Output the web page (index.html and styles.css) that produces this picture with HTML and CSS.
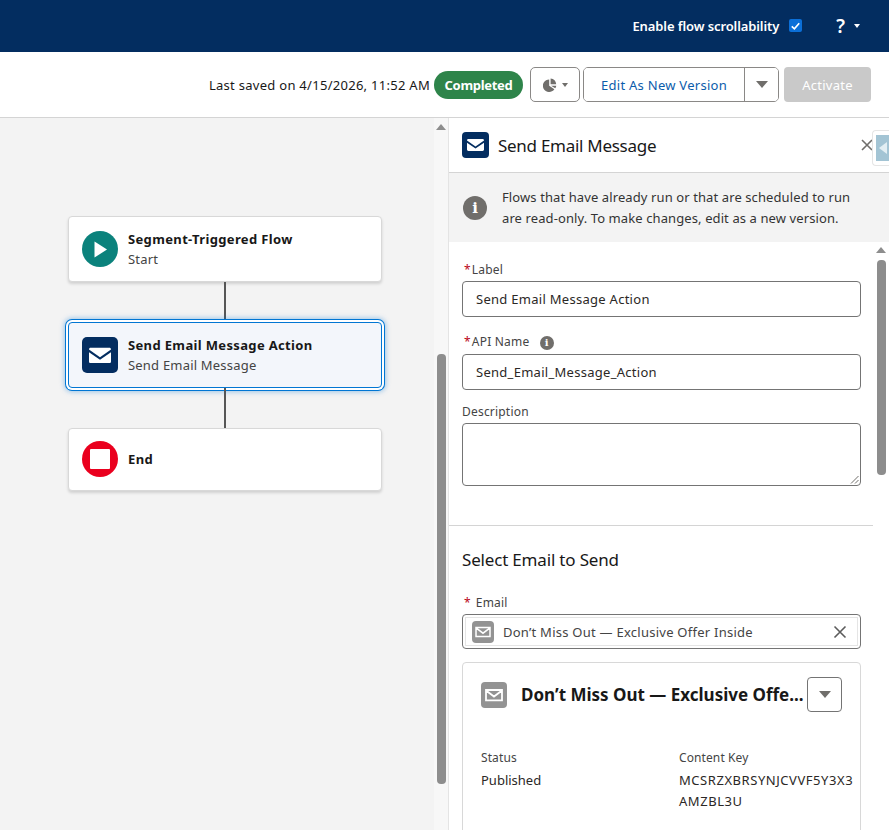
FILE: index.html
```html
<!DOCTYPE html>
<html lang="en">
<head>
    <meta charset="UTF-8">
    <meta name="viewport" content="width=device-width, initial-scale=1.0">
    <title>Send Email Message</title>
    <link rel="stylesheet" href="styles.css">
</head>
<body>
    <div class="topbar">
        <span class="scroll-label">Enable flow scrollability</span>
        <span class="checkbox">
            <svg viewBox="0 0 14 14" width="14" height="14"><path d="M3 7.4 5.8 10 11 4" fill="none" stroke="#fff" stroke-width="1.8"/></svg>
        </span>
        <span class="help">?</span>
        <span class="caret caret-white"></span>
    </div>

    <div class="toolbar">
        <span class="saved">Last saved on 4/15/2026, 11:52 AM</span>
        <span class="badge">Completed</span>
        <button class="btn btn-chart">
            <svg viewBox="0 0 14 14" width="14" height="14"><path d="M6.2 1.4v6.4l5.2 3.4A6.3 6.3 0 1 1 6.2 1.4zM7.6.6a6.3 6.3 0 0 1 5.6 5.7H7.6zM8 7.7h5.3a6.3 6.3 0 0 1-1 2.6z" fill="#706e6b"/></svg>
            <span class="caret caret-grey"></span>
        </button>
        <div class="btn-group">
            <button class="btn-main">Edit As New Version</button>
            <button class="btn-more"><span class="caret caret-big"></span></button>
        </div>
        <button class="btn-activate">Activate</button>
    </div>

    <div class="main">
        <div class="canvas">
            <div class="node">
                <span class="node-icon icon-start">
                    <svg viewBox="0 0 36 36" width="36" height="36"><path d="M12.5 10.500 25 18.500 12.500 26.500z" fill="#fff"/></svg>
                </span>
                <div class="node-text">
                    <div class="node-title">Segment-Triggered Flow</div>
                    <div class="node-sub">Start</div>
                </div>
            </div>
            <div class="connector"></div>
            <div class="node node-selected">
                <span class="node-icon icon-mail">
                    <svg viewBox="0 0 36 36" width="36" height="36"><path d="M7 12.6v-.2c0-.9.7-1.6 1.6-1.6h18.8c.9 0 1.6.7 1.6 1.6v.2L18 20.3z" fill="#fff"/><path d="M7 15.2v9.2c0 .9.7 1.6 1.6 1.6h18.8c.9 0 1.6-.7 1.6-1.6v-9.2l-11 7.6z" fill="#fff"/></svg>
                </span>
                <div class="node-text">
                    <div class="node-title">Send Email Message Action</div>
                    <div class="node-sub">Send Email Message</div>
                </div>
            </div>
            <div class="connector"></div>
            <div class="node node-end">
                <span class="node-icon icon-end"><span class="stop"></span></span>
                <div class="node-title">End</div>
            </div>
        </div>

        <div class="canvas-scroll">
            <span class="arrow-up"></span>
            <span class="canvas-thumb"></span>
        </div>

        <div class="panel">
            <div class="panel-head">
                <span class="head-icon">
                    <svg viewBox="0 0 27 26" width="27" height="26"><path d="M5 8.6v-.2c0-.8.6-1.4 1.4-1.4h14.2c.8 0 1.4.6 1.4 1.4v.2l-8.5 5.8z" fill="#fff"/><path d="M5 10.8v6.8c0 .8.6 1.4 1.4 1.4h14.2c.8 0 1.4-.6 1.4-1.4v-6.8l-8.5 5.8z" fill="#fff"/></svg>
                </span>
                <h2>Send Email Message</h2>
                <svg class="head-close" viewBox="0 0 14 14" width="14" height="14"><path d="M2 2l10 10M12 2 2 12" stroke="#706e6b" stroke-width="1.6"/></svg>
                <span class="side-tab"><span class="side-tab-inner"><span class="side-arrow"></span></span></span>
            </div>
            <div class="notice">
                <span class="info-icon">i</span>
                <p>Flows that have already run or that are scheduled to run are read-only. To make changes, edit as a new version.</p>
            </div>
            <div class="panel-body">
                <div class="form">
                    <div class="fields">
                        <label class="lbl"><span class="req">*</span>Label</label>
                        <div class="input">Send Email Message Action</div>
                        <label class="lbl lbl-api"><span class="req">*</span>API Name <span class="info-small">i</span></label>
                        <div class="input">Send_Email_Message_Action</div>
                        <label class="lbl lbl-desc">Description</label>
                        <div class="textarea">
                            <svg class="grip" viewBox="0 0 9 9" width="9" height="9"><path d="M8.5 1 1 8.5M8.5 5 5 8.5" stroke="#706e6b" stroke-width="1"/></svg>
                        </div>
                    </div>
                    <div class="divider"></div>
                    <div class="email-section">
                        <h3>Select Email to Send</h3>
                        <label class="lbl lbl-email"><span class="req req-wide">*</span>Email</label>
                        <div class="pill-box">
                            <div class="pill">
                                <span class="pill-icon">
                                    <svg viewBox="0 0 22 22" width="22" height="22"><path d="M4 6.400h14v9.200H4zM4 6.800l7 5.400 7-5.400" fill="none" stroke="#fff" stroke-width="1.500"/></svg>
                                </span>
                                <span class="pill-text">Don’t Miss Out — Exclusive Offer Inside</span>
                                <svg class="pill-x" viewBox="0 0 14 14" width="14" height="14"><path d="M1.5 1.5l11 11M12.5 1.5l-11 11" stroke="#5c5c5c" stroke-width="1.6"/></svg>
                            </div>
                        </div>
                        <div class="email-card">
                            <div class="card-head">
                                <span class="card-icon">
                                    <svg viewBox="0 0 26 26" width="26" height="26"><path d="M5 8h16v10.400H5zM5 8.500l8 6 8-6" fill="none" stroke="#fff" stroke-width="1.800"/></svg>
                                </span>
                                <span class="card-title">Don’t Miss Out — Exclusive Offe...</span>
                                <button class="card-menu"><span class="caret caret-big"></span></button>
                            </div>
                            <div class="card-grid">
                                <div class="cell-status">
                                    <div class="cell-label">Status</div>
                                    <div class="cell-value">Published</div>
                                </div>
                                <div class="cell-key">
                                    <div class="cell-label">Content Key</div>
                                    <div class="cell-value key-value">MCSRZXBRSYNJCVVF5Y3X3<br>AMZBL3U</div>
                                </div>
                            </div>
                        </div>
                    </div>
                </div>
                <div class="panel-scroll">
                    <span class="arrow-up"></span>
                    <span class="panel-thumb"></span>
                </div>
            </div>
        </div>
    </div>
</body>
</html>
```

FILE: styles.css
```css
* {
    box-sizing: border-box;
}
html, body {
    height: 100%;
}
body {
    margin: 0;
    height: 830px;
    overflow: hidden;
    font-family: "Noto Sans", "Open Sans", Arial, sans-serif;
    font-size: 13px;
    color: #181818;
    background-color: #fff;
    display: flex;
    flex-direction: column;
}
button {
    font-family: inherit;
    padding: 0;
    background: #fff;
}

/* top bar */
.topbar {
    height: 52px;
    flex: none;
    background-color: #032d60;
    color: #fff;
    display: flex;
    align-items: center;
    justify-content: flex-end;
    padding-right: 29px;
    padding-bottom: 1px;
}
.scroll-label {
    font-size: 13px;
    font-weight: 600;
    letter-spacing: -0.1px;
}
.checkbox {
    width: 13px;
    height: 13px;
    margin-left: 10px;
    background-color: #0b6fd8;
    border-radius: 2px;
    display: flex;
    align-items: center;
    justify-content: center;
}
.help {
    font-size: 19px;
    font-weight: 600;
    margin-left: 34px;
    margin-right: 9px;
}
.caret {
    display: inline-block;
    width: 0;
    height: 0;
    border-left: 3.500px solid transparent;
    border-right: 3.500px solid transparent;
    border-top: 4px solid #706e6b;
}
.caret-white {
    border-top-color: #fff;
}
.caret-big {
    border-left-width: 6px;
    border-right-width: 6px;
    border-top-width: 7px;
}

/* toolbar */
.toolbar {
    height: 66px;
    flex: none;
    border-bottom: 1px solid #d4d4d4;
    display: flex;
    align-items: center;
    justify-content: flex-end;
    padding-right: 18px;
}
.saved {
    font-size: 13px;
    letter-spacing: 0.28px;
    margin-right: 4px;
}
.badge {
    height: 28px;
    width: 89px;
    border-radius: 14px;
    background-color: #2e844a;
    color: #fff;
    font-size: 13px;
    font-weight: 700;
    letter-spacing: -0.3px;
    display: flex;
    align-items: center;
    justify-content: center;
    margin-right: 7px;
}
.btn-chart {
    width: 50px;
    height: 35px;
    border: 1px solid #8a8886;
    border-radius: 5px;
    display: flex;
    align-items: center;
    justify-content: center;
    gap: 5px;
    margin-right: 3px;
}
.btn-group {
    display: flex;
    height: 35px;
    border: 1px solid #8a8886;
    border-radius: 5px;
    margin-right: 5px;
}
.btn-main {
    width: 161px;
    border: none;
    border-right: 1px solid #8a8886;
    border-radius: 4px 0 0 4px;
    color: #0b5cab;
    font-size: 13px;
    letter-spacing: 0.27px;
}
.btn-more {
    width: 33px;
    border: none;
    border-radius: 0 4px 4px 0;
    display: flex;
    align-items: center;
    justify-content: center;
}
.btn-activate {
    width: 87px;
    height: 35px;
    border: none;
    border-radius: 4px;
    background-color: #c9c9c9;
    color: #fff;
    font-size: 13px;
    letter-spacing: 0.25px;
}

/* layout under the toolbar */
.main {
    flex: 1;
    display: flex;
    min-height: 0;
}
.canvas {
    width: 434px;
    flex: none;
    background-color: #f3f3f3;
    padding: 98px 0 0 68px;
}
.node {
    width: 314px;
    height: 66px;
    background-color: #fff;
    border: 1px solid #d8d8d8;
    border-radius: 4px;
    box-shadow: 0 2px 3px rgba(0, 0, 0, 0.14);
    display: flex;
    align-items: center;
    padding-left: 13px;
    gap: 10px;
}
.node-selected {
    background-color: #f3f6fb;
    border: 1px solid #0176d3;
    box-shadow: 0 0 0 2px #fff, 0 0 0 3px #0176d3, 0 0 5px 4px rgba(1, 118, 211, 0.35);
}
.node-end {
    height: 63px;
    padding-bottom: 1px;
}
.node-text {
    margin-top: 2px;
}
.node-icon {
    width: 36px;
    height: 36px;
    flex: none;
    display: flex;
    align-items: center;
    justify-content: center;
}
.icon-start {
    background-color: #0b827c;
    border-radius: 50%;
}
.icon-mail {
    background-color: #032d60;
    border-radius: 5px;
}
.icon-end {
    background-color: #ea001e;
    border-radius: 50%;
}
.stop {
    width: 20px;
    height: 20px;
    background-color: #fff;
    border-radius: 1px;
}
.node-title {
    font-size: 13px;
    font-weight: 700;
    line-height: 18px;
    letter-spacing: 0.35px;
}
.node-sub {
    font-size: 13px;
    line-height: 22px;
    color: #444;
    letter-spacing: 0.2px;
}
.connector {
    width: 2px;
    height: 40px;
    margin-left: 156px;
    background-color: #565656;
}
.canvas-scroll {
    width: 15px;
    flex: none;
    background-color: #f7f7f7;
    display: flex;
    flex-direction: column;
    align-items: center;
    padding-top: 6px;
    border-right: 1px solid #e4e4e4;
}
.arrow-up {
    width: 0;
    height: 0;
    border-left: 5px solid transparent;
    border-right: 5px solid transparent;
    border-bottom: 6px solid #8d8d8d;
}
.canvas-thumb {
    width: 9px;
    height: 430px;
    margin-top: 224px;
    border-radius: 4px;
    background-color: #8d8d8d;
}

/* right panel */
.panel {
    flex: 1;
    min-width: 0;
    display: flex;
    flex-direction: column;
}
.panel-head {
    height: 55px;
    flex: none;
    border-bottom: 1px solid #d4d4d4;
    display: flex;
    align-items: center;
    padding-left: 13px;
    position: relative;
}
.head-icon {
    width: 27px;
    height: 26px;
    background-color: #032d60;
    border-radius: 4px;
    display: flex;
}
.panel-head h2 {
    margin: 0 0 0 9px;
    font-size: 17px;
    font-weight: 400;
    letter-spacing: -0.28px;
    flex: 1;
}
.head-close {
    position: absolute;
    left: 411px;
    top: 20px;
}
.side-tab {
    position: absolute;
    right: 0;
    top: 12px;
    width: 17px;
    height: 36px;
    background-color: #fff;
    border: 1px solid #e5e5e5;
    border-right: none;
    border-radius: 4px 0 0 4px;
    padding: 4px 0 0 3px;
}
.side-tab-inner {
    display: block;
    height: 26px;
    background-color: #a3c4d4;
    padding: 7px 0 0 3px;
}
.side-arrow {
    display: block;
    width: 0;
    height: 0;
    border-top: 6px solid transparent;
    border-bottom: 6px solid transparent;
    border-right: 8px solid #e2eef3;
}
.notice {
    height: 69px;
    flex: none;
    background-color: #f3f3f3;
    display: flex;
    align-items: center;
    padding-left: 14px;
    gap: 15px;
}
.notice p {
    margin: 0;
    width: 352px;
    font-size: 13px;
    line-height: 21px;
    color: #333;
    letter-spacing: 0.1px;
}
.info-icon, .info-small {
    background-color: #706e6b;
    color: #fff;
    border-radius: 50%;
    font-family: "DejaVu Serif", serif;
    font-weight: 700;
    display: inline-flex;
    align-items: center;
    justify-content: center;
    flex: none;
}
.info-icon {
    width: 24px;
    height: 24px;
    font-size: 15px;
}
.info-small {
    width: 14px;
    height: 14px;
    font-size: 10px;
    margin-left: 7px;
}
.panel-body {
    flex: 1;
    display: flex;
    min-height: 0;
}
.form {
    flex: 1;
    min-width: 0;
    overflow: hidden;
}
.fields {
    padding: 20px 12px 0 13px;
    height: 283px;
}
.lbl {
    display: block;
    font-size: 12px;
    line-height: 16px;
    color: #444;
    margin-bottom: 3px;
    letter-spacing: 0.2px;
}
.lbl-api {
    margin-top: 17px;
    margin-bottom: 4px;
}
.lbl-desc {
    margin-top: 14px;
}
.req {
    color: #ba0517;
    margin-left: 2px;
    margin-right: 1px;
}
.req-wide {
    margin-right: 5px;
}
.input {
    height: 36px;
    border: 1px solid #747474;
    border-radius: 4px;
    padding-left: 13px;
    display: flex;
    align-items: center;
    font-size: 13px;
    color: #2b2826;
    letter-spacing: 0.28px;
}
.textarea {
    height: 63px;
    border: 1px solid #747474;
    border-radius: 4px;
    position: relative;
}
.grip {
    position: absolute;
    right: 1px;
    bottom: 1px;
}
.divider {
    height: 1px;
    background-color: #d4d4d4;
}
.email-section {
    padding: 22px 12px 0 13px;
}
.email-section h3 {
    margin: 0;
    font-size: 17px;
    font-weight: 400;
    line-height: 24px;
    letter-spacing: -0.18px;
}
.lbl-email {
    margin-top: 23px;
}
.pill-box {
    height: 35px;
    border: 1px solid #747474;
    border-radius: 4px;
    padding: 2px;
}
.pill {
    height: 29px;
    border: 1px solid #e5e5e5;
    display: flex;
    align-items: center;
    padding-left: 6px;
}
.pill-icon {
    width: 22px;
    height: 22px;
    border-radius: 4px;
    background-color: #939393;
    flex: none;
    display: flex;
}
.pill-text {
    flex: 1;
    margin-left: 9px;
    font-size: 13px;
    color: #444;
    letter-spacing: 0.25px;
}
.pill-x {
    margin-right: 10px;
}
.email-card {
    margin-top: 13px;
    height: 240px;
    border: 1px solid #d8d8d8;
    border-radius: 4px;
    padding: 14px 0 0 18px;
}
.card-head {
    display: flex;
    align-items: center;
    height: 35px;
}
.card-icon {
    width: 26px;
    height: 26px;
    border-radius: 4px;
    background-color: #939393;
    flex: none;
    display: flex;
}
.card-title {
    margin-left: 14px;
    width: 286px;
    white-space: nowrap;
    font-size: 17px;
    font-weight: 700;
    letter-spacing: 0;
}
.card-menu {
    width: 35px;
    height: 35px;
    border: 1px solid #747474;
    border-radius: 4px;
    display: flex;
    align-items: center;
    justify-content: center;
}
.card-grid {
    display: flex;
    margin-top: 38px;
}
.cell-status {
    width: 198px;
}
.cell-label {
    font-size: 12px;
    line-height: 16px;
    color: #444;
    letter-spacing: 0.1px;
}
.cell-value {
    margin-top: 4px;
    font-size: 13px;
    line-height: 21px;
    color: #2b2826;
}
.key-value {
    letter-spacing: 0.55px;
}
.panel-scroll {
    width: 16px;
    flex: none;
    display: flex;
    flex-direction: column;
    align-items: center;
    padding-top: 5px;
    background-color: #fff;
}
.panel-thumb {
    width: 9px;
    height: 215px;
    margin-top: 7px;
    border-radius: 4px;
    background-color: #8d8d8d;
}
```
